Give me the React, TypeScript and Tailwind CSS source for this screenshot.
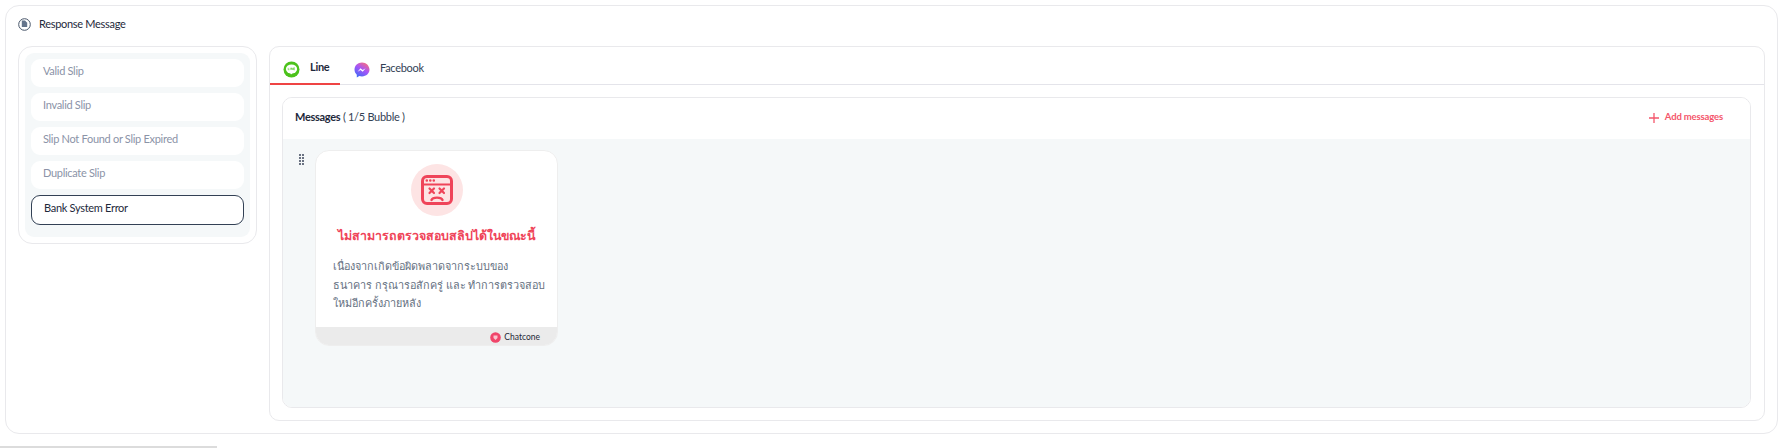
const slipTypes = ["Valid Slip", "Invalid Slip", "Slip Not Found or Slip Expired", "Duplicate Slip"];

function DocIcon() {
  return (
    <svg width="13" height="14" viewBox="0 0 13 14" fill="none">
      <circle cx="6.500" cy="7.500" r="5.800" stroke="#475569" strokeWidth="1" />
      <path d="M3.800 3.500h3.200l2.200 2.200v4.300H3.800z" fill="#64748b" />
    </svg>
  );
}

function LineIcon() {
  return (
    <svg width="17" height="17" viewBox="0 0 17 17">
      <circle cx="8.500" cy="8.500" r="8" fill="#4cc21b" />
      <ellipse cx="8.500" cy="8" rx="5.600" ry="4.500" fill="#fff" />
      <path d="M7 11.500l1 2 2.500-2.300z" fill="#fff" />
      <path d="M5.200 6.800v2h1.200M7.300 6.800v2M8.500 8.800v-2l1.400 2v-2M11.800 6.800h-1.100v2h1.100M10.700 7.800h1" stroke="#4cc21b" strokeWidth="0.600" fill="none" />
    </svg>
  );
}

function MessengerIcon() {
  return (
    <svg width="16" height="16" viewBox="0 0 16 16">
      <defs>
        <linearGradient id="mess" x1="0.2" y1="1" x2="0.8" y2="0">
          <stop offset="0" stopColor="#3b6cf6" />
          <stop offset="0.55" stopColor="#a855f7" />
          <stop offset="1" stopColor="#fb6f7a" />
        </linearGradient>
      </defs>
      <path d="M8 .5C3.800.5.500 3.600.500 7.600c0 2.100.900 3.900 2.300 5.100v2.800l2.500-1.400c.800.300 1.700.400 2.700.400 4.200 0 7.500-3.100 7.500-6.900S12.200.500 8 .500z" fill="url(#mess)" />
      <path d="M3.600 9.800l2.900-3.500 2.200 1.700 2.900-1.700-2.900 3.500-2.200-1.700z" fill="#fff" />
    </svg>
  );
}

function ErrorWindowIcon() {
  return (
    <svg width="32" height="30" viewBox="0 0 32 30" fill="none" stroke="#ef4459" strokeWidth="3" strokeLinecap="round">
      <rect x="1.500" y="1.500" width="29" height="27" rx="4.500" />
      <path d="M1.500 9.500h29" strokeWidth="2.200" />
      <path d="M5.800 5.500h.01M9.300 5.500h.01M12.800 5.500h.01" strokeWidth="2.600" />
      <path d="M8.500 13.500l4.500 4.500M13 13.500l-4.500 4.500M18.500 13.500l4.500 4.500M23 13.500l-4.500 4.500" strokeWidth="2.200" />
      <path d="M10.500 25c1.200-3.200 9.800-3.200 11 0" strokeWidth="2.400" />
    </svg>
  );
}

function ChatconeLogo() {
  return (
    <svg width="11" height="11" viewBox="0 0 11 11">
      <circle cx="5.500" cy="5.500" r="5.300" fill="#f0456a" />
      <path d="M3.500 3.500h4v2.500l-2 2-2-2z" fill="#fbc4cf" />
    </svg>
  );
}

function DragDots() {
  return (
    <div className="grid grid-cols-2 gap-x-[1px] gap-y-[1px] w-[5px] shrink-0 mt-[4px]">
      {[0, 1, 2, 3, 4, 5, 6, 7].map((i) => (
        <span key={i} className="w-[2px] h-[2px] bg-gray-500" />
      ))}
    </div>
  );
}

export default function App() {
  return (
    <div className="w-[1791px] h-[448px] bg-white overflow-hidden relative font-['Lato','Noto_Sans',sans-serif]">
      <div className="ml-[5px] mt-[5px] w-[1773px] h-[429px] border border-[#e9e9ec] rounded-[14px] px-[12px] pt-[9px]">
        <div className="flex items-center gap-[8px] h-[18px]">
          <DocIcon />
          <span className="text-[11px] tracking-[-0.3px] text-[#1e293b]">Response Message</span>
        </div>
        <div className="flex gap-[12px] mt-[13px]">
          <div className="w-[239px] h-[198px] shrink-0 border border-[#e9e9ec] rounded-[14px] p-[6px]">
            <div className="h-[184px] bg-[#f5f8f9] rounded-[9px] px-[6px] pt-[6px] flex flex-col gap-[6px]">
              {slipTypes.map((name) => (
                <div key={name} className="h-[28px] shrink-0 bg-white rounded-[9px] pl-[12px] pb-[3px] flex items-center text-[11px] tracking-[-0.3px] text-[#8b93a7]">
                  {name}
                </div>
              ))}
              <div className="h-[30px] shrink-0 bg-white rounded-[9px] border border-[#334155] pl-[12px] pb-[3px] flex items-center text-[11px] tracking-[-0.3px] text-[#1e293b]">
                Bank System Error
              </div>
            </div>
          </div>
          <div className="flex-1 h-[375px] border border-[#e9e9ec] rounded-[10px]">
            <div className="h-[38px] border-b border-[#e4e4ea] flex">
              <div className="w-[70px] h-[38px] border-b-2 border-[#ef4444] flex items-center pl-[13px] gap-[10px] pt-[8px]">
                <LineIcon />
                <span className="mb-[4px] text-[11px] tracking-[-0.3px] font-bold text-[#1e293b]">Line</span>
              </div>
              <div className="flex items-center pl-[14px] gap-[10px] pt-[8px]">
                <MessengerIcon />
                <span className="mb-[3px] text-[11px] tracking-[-0.3px] text-[#334155]">Facebook</span>
              </div>
            </div>
            <div className="ml-[12px] mr-[13px] mt-[12px] h-[311px] border border-[#e9e9ec] rounded-[10px] overflow-hidden flex flex-col">
              <div className="h-[41px] shrink-0 bg-white flex items-center justify-between pl-[12px] pr-[27px] pb-[2px]">
                <span className="text-[11px] tracking-[-0.3px] text-[#334155]">
                  <span className="font-bold text-[#1e293b]">Messages</span> ( 1/5 Bubble )
                </span>
                <span className="flex items-center gap-[6px] text-[9.500px] tracking-[-0.15px] font-bold text-[#f4566b]">
                  <svg width="10" height="10" viewBox="0 0 10 10" stroke="#f4566b" strokeWidth="1.300">
                    <path d="M5 0v10M0 5h10" />
                  </svg>
                  Add messages
                </span>
              </div>
              <div className="flex-1 bg-[#f5f8f9] pl-[16px] pt-[11px] flex gap-[11px] items-start">
                <DragDots />
                <div className="w-[243px] h-[196px] bg-white rounded-[14px] border border-[#eeeeee] overflow-hidden flex flex-col">
                  <div className="flex-1 flex flex-col">
                    <div className="mt-[13px] mx-auto w-[52px] h-[52px] rounded-full bg-[#fde4e4] flex items-center justify-center">
                      <ErrorWindowIcon />
                    </div>
                    <div className="mt-[10px] text-center text-[12.400px] font-bold leading-[20px] whitespace-nowrap text-[#ef4459]">
                      ไม่สามารถตรวจสอบสลิปได้ในขณะนี้
                    </div>
                    <div className="mt-[11px] px-[17px] text-[10.800px] leading-[18.500px] whitespace-nowrap text-[#64707f]">
                      เนื่องจากเกิดข้อผิดพลาดจากระบบของ
                      <br />
                      ธนาคาร กรุณารอสักครู่ และ ทำการตรวจสอบ
                      <br />
                      ใหม่อีกครั้งภายหลัง
                    </div>
                  </div>
                  <div className="h-[18px] shrink-0 bg-[#ebebeb] flex items-center justify-end pr-[17px] pt-[3px] gap-[3px]">
                    <ChatconeLogo />
                    <span className="text-[8.500px] text-[#1f2937]">Chatcone</span>
                  </div>
                </div>
              </div>
            </div>
          </div>
        </div>
      </div>
      <div className="absolute left-0 bottom-0 w-[217px] h-[2px] bg-[#dcdcdc]" />
    </div>
  );
}
